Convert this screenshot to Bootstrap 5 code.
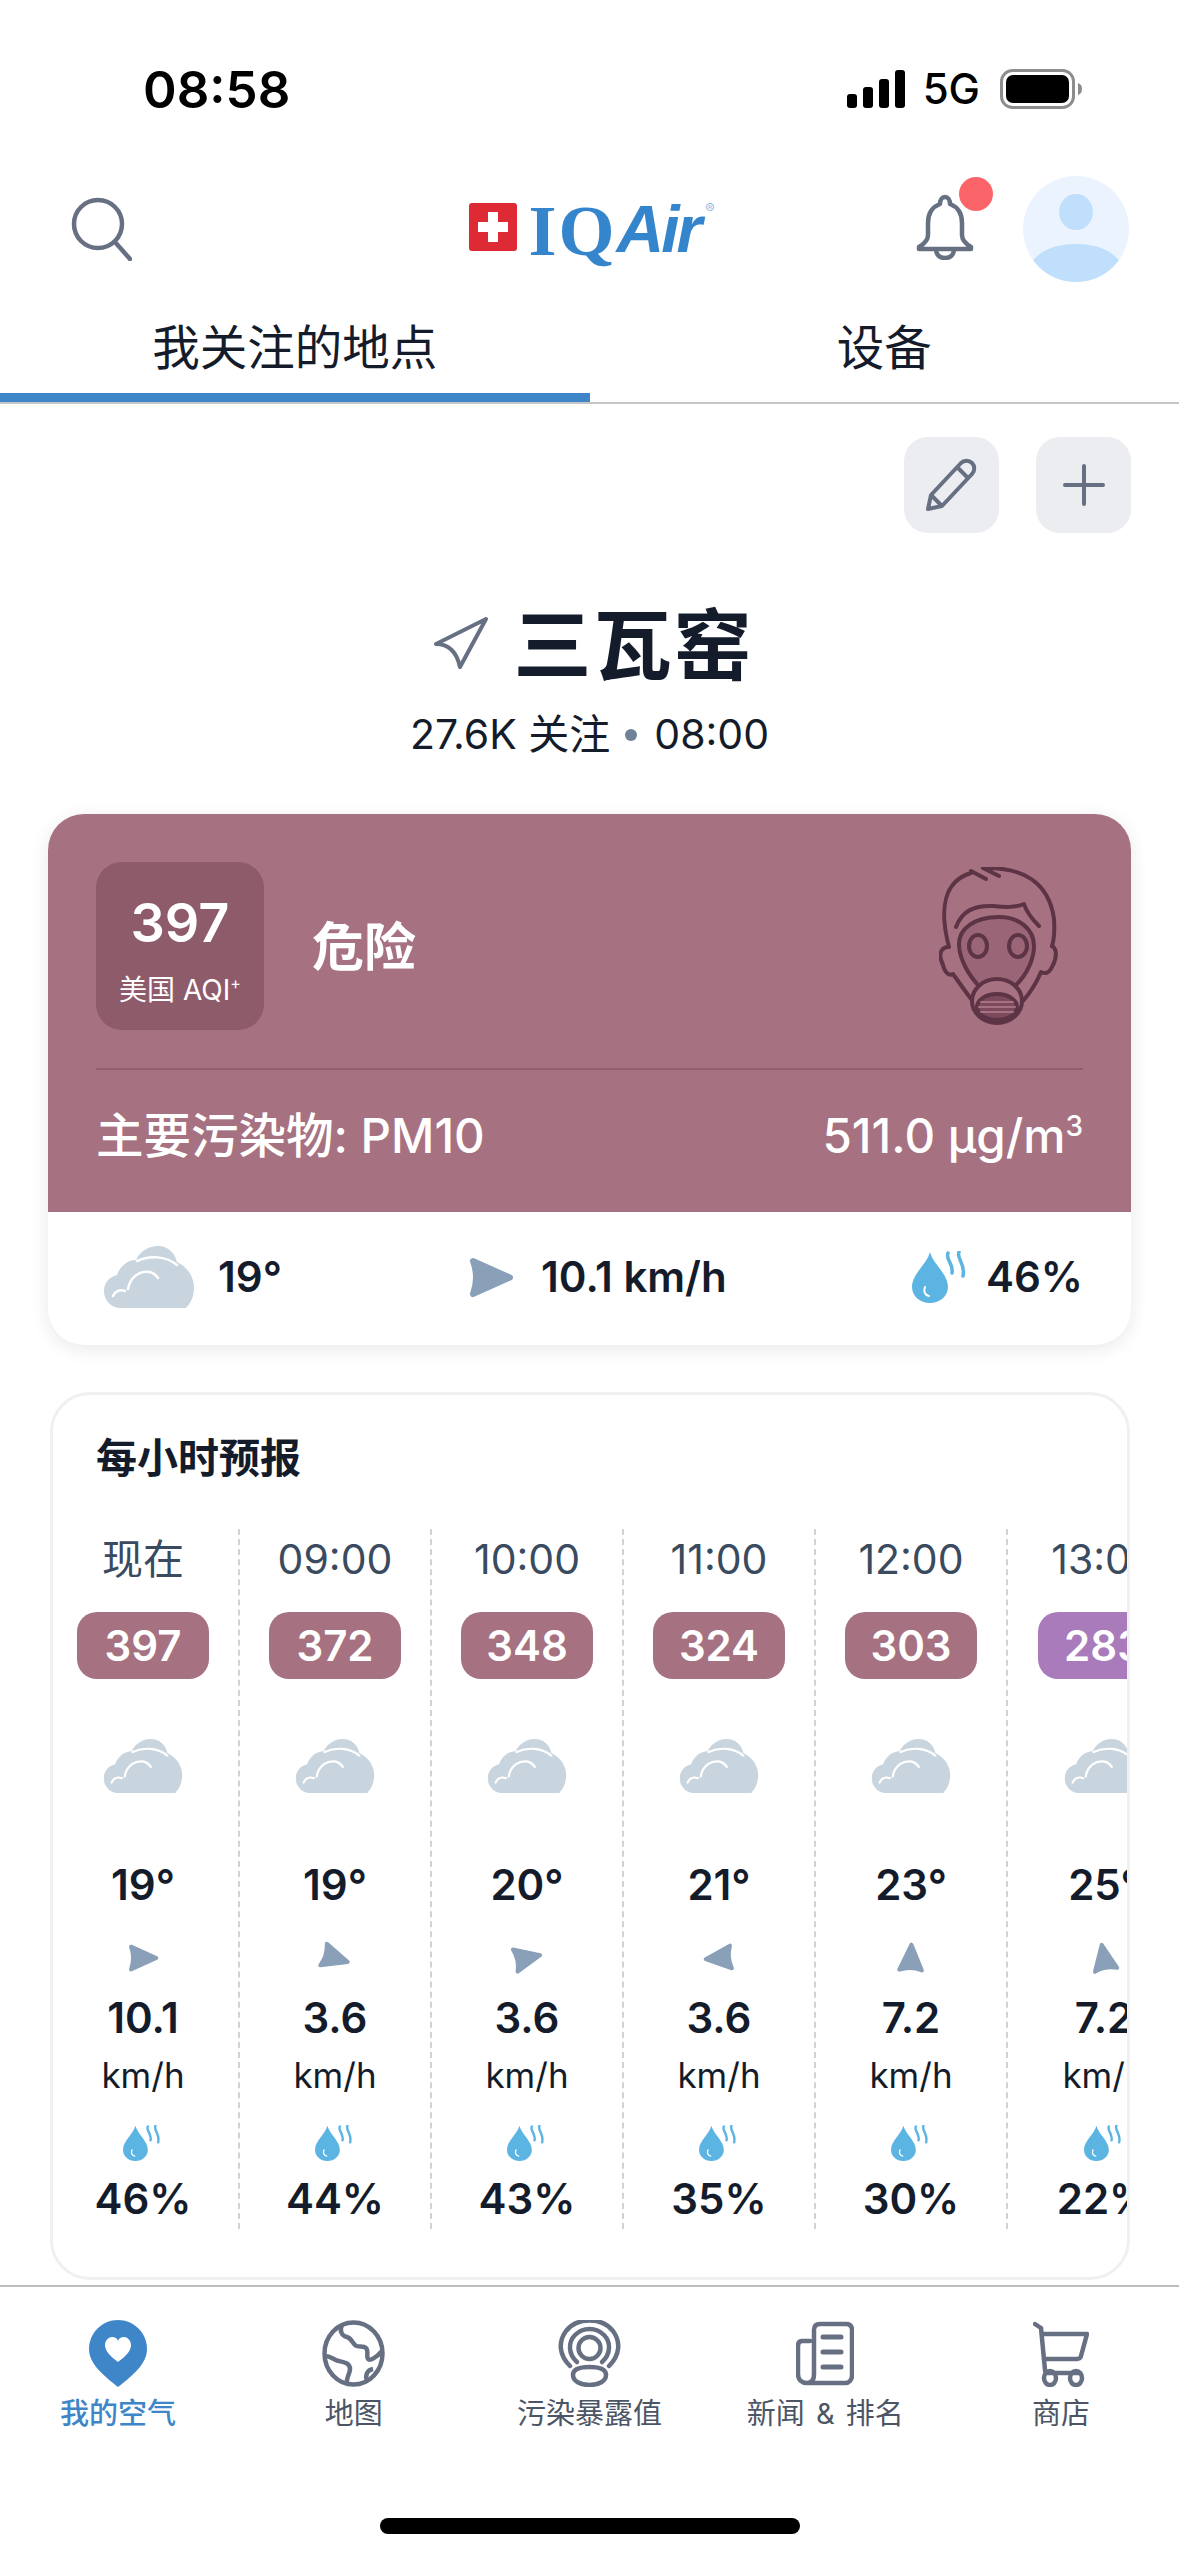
<!DOCTYPE html>
<html lang="zh">
<head>
    <meta charset="UTF-8">
    <meta name="viewport" content="width=device-width, initial-scale=1.0">
    <title>IQAir</title>
    <link href="https://cdn.jsdelivr.net/npm/bootstrap@5.3.0/dist/css/bootstrap.min.css" rel="stylesheet">
    <style>
        body { width: 1179px; height: 2556px; overflow: hidden; background: #fff; color: #141c2b; font-family: Inter, "Noto Sans CJK SC", sans-serif; }
        .status-row { height: 176px; padding: 2px 97px 0 143px; color: #000; }
        .status-time { font-size: 51px; font-weight: 600; line-height: 1; }
        .status-net { font-size: 42px; font-weight: 500; line-height: 1; margin: 0 20px 0 17px; }
        .head-row { height: 104px; display: grid; grid-template-columns: 1fr auto 1fr; padding: 0 50px 2px 70px; }
        .iq-logo { width: 242px; height: 76px; margin-left: -20px; color: #3585cd; line-height: 1; }
        .iq-flag { width: 48px; height: 48px; margin-top: 12px; flex: none; }
        .iq-serif { font-family: "Liberation Serif", serif; font-size: 72px; font-weight: 700; margin: 4px 0 0 12px; letter-spacing: 2px; }
        .iq-sans { font-family: "Liberation Sans", sans-serif; font-size: 66px; font-weight: 700; font-style: italic; margin-top: 5px; letter-spacing: -3px; }
        .iq-reg { font-size: 14px; color: #8dbde4; margin: 11px 0 0 6px; }
        .bell-wrap { width: 60px; height: 72px; margin: 0 48px 10px 0; }
        .bell-dot { position: absolute; top: -11px; left: 44px; width: 34px; height: 34px; border-radius: 50%; background: #fb6468; }
        .tab-row { height: 124px; margin: 0; border-bottom: 2px solid #c4c6c9; }
        .tab-row .nav-link { color: #141c2b; font-size: 47.5px; line-height: 60px; padding: 38px 0 24px; margin-bottom: -2px; }
        .tab-row .active-tab { border-bottom: 9px solid #3f86c8; padding-bottom: 15px; }
        .tool-row { padding: 33px 48px 0 0; gap: 37px; }
        .tool-btn { width: 95px; height: 96px; padding: 0; border: 0; border-radius: 24px; background: #ebedf1; }
        .place-row { margin-top: 72px; height: 82px; gap: 24px; padding-left: 8px; }
        .place-row svg { margin-bottom: 6px; }
        .place-name { font-size: 78px; font-weight: 700; line-height: 82px; letter-spacing: 2px; }
        .place-sub { margin-top: 22px; font-size: 41px; line-height: 50px; }
        .sub-dot { display: inline-block; width: 12px; height: 12px; border-radius: 50%; background: #6f8299; margin: 0 17px 6px 15px; vertical-align: middle; }
        .aqi-card { margin: 55px 48px 0; height: 531px; border: 0; border-radius: 36px; overflow: hidden; box-shadow: 0 4px 18px rgba(20, 30, 50, .1); }
        .aqi-top { height: 398px; padding: 48px 48px 0; background: #a67180; color: #fff; }
        .aqi-box { width: 168px; height: 168px; border-radius: 26px; background: #8e5b6b; padding-top: 30px; }
        .aqi-num { font-size: 54px; font-weight: 600; line-height: 62px; }
        .aqi-lbl { font-size: 28px; line-height: 30px; margin-top: 21px; white-space: nowrap; }
        .aqi-lbl sup { font-size: 16px; top: -.7em; }
        .aqi-word { font-size: 52px; font-weight: 600; margin: 3px 0 0 48px; line-height: 60px; }
        .aqi-rule { height: 2px; background: #945e70; margin: 38px 0 0; }
        .aqi-main { font-size: 47.5px; font-weight: 500; line-height: 56px; margin-top: 38px; }
        .aqi-main sup { font-size: 28px; top: -.6em; }
        .aqi-low { height: 133px; padding: 0 48px 3px 56px; }
        .low-gap { gap: 27px; }
        .low-val { font-size: 42px; font-weight: 600; line-height: 50px; }
        .hour-card { margin: 47px 49px 0 50px; height: 888px; border: 3px solid #eef0f2; border-radius: 40px; overflow: hidden; }
        .hour-title { font-size: 41px; font-weight: 600; line-height: 50px; margin: 38px 0 46px 43px; }
        .hour-track { margin-left: -5px; }
        .hour-col { flex: 0 0 192px; height: 700px; border-right: 2px dashed #cfd2d6; }
        .hour-col:last-child { border-right: 0; }
        .h-time { font-size: 41px; line-height: 60px; color: #3a4a5f; }
        .h-pill { width: 132px; height: 67px; margin-top: 23px; border-radius: 20px; color: #fff; font-size: 42px; font-weight: 600; line-height: 67px; text-align: center; }
        .h-cloud { margin-top: 60px; }
        .h-temp { margin-top: 67px; font-size: 42px; font-weight: 600; line-height: 50px; }
        .h-wind { margin-top: 33px; }
        .h-speed { margin-top: 20px; font-size: 42px; font-weight: 600; line-height: 50px; }
        .h-unit { margin-top: 7px; font-size: 35px; line-height: 50px; }
        .h-drop { margin: 25px 0 0 0; }
        .h-pct { margin-top: 13px; font-size: 42px; font-weight: 600; line-height: 50px; }
        .tab-bar { margin-top: 5px; border-top: 2px solid #bcbec1; padding-top: 33px; }
        .tab-item { flex: 1 1 0; color: #4c5566; font-size: 29px; line-height: 40px; white-space: nowrap; word-spacing: 3px; }
        .tab-item svg { height: 67px; margin-bottom: 7px; }
        .tab-on { color: #3f86c8; font-weight: 500; }
        .home-bar { width: 420px; height: 16px; border-radius: 8px; background: #000; margin: 84px auto 0; }
    </style>
</head>
<body>

    <svg width="0" height="0" class="position-absolute">
        <symbol id="cloud" viewBox="0 0 90 62">
            <path fill="#c9d5de" d="M14 62C5 60 0 53 0 45 0 37 5 31 13 29 16 20 24 14 32 14 36 5 45 0 54 0 64 0 71 7 73 16 83 21 90 30 90 42 90 50 87 57 82 62Z"/>
            <path fill="none" stroke="#fff" stroke-width="2.5" stroke-linecap="round" d="M9 50C11 45 16 43 21 45M24 43C26 31 36 24 46 26 50 27 52 29 54 32M33 15C46 9 62 10 73 19"/>
        </symbol>
        <symbol id="wind" viewBox="0 0 48 44">
            <path fill="#8aa0b8" stroke="#8aa0b8" stroke-width="6" stroke-linejoin="round" d="M6 5 44 22 6 39C10 28 10 16 6 5Z"/>
        </symbol>
        <symbol id="drop" viewBox="0 0 58 52">
            <path fill="#5bb4e2" d="M18 1C15 13 0 23 0 36 0 45 8 52 18 52 28 52 36 45 36 36 36 23 21 13 18 1Z"/>
            <path fill="none" stroke="#fff" stroke-width="2" stroke-linecap="round" d="M13 36C11 41 13 44 17 45"/>
            <path fill="none" stroke="#5bb4e2" stroke-width="3.5" stroke-linecap="round" d="M36 2C33 8 42 13 40 22M47 1C44 7 54 13 51 25"/>
        </symbol>
    </svg>

    <!-- barre d'etat -->
    <div class="status-row d-flex justify-content-between align-items-center">
        <span class="status-time">08:58</span>
        <div class="d-flex align-items-center">
            <svg width="59" height="38" viewBox="0 0 59 38"><g fill="#000"><rect x="0" y="24" width="10" height="14" rx="3"/><rect x="16" y="17" width="10" height="21" rx="3"/><rect x="32" y="9" width="10" height="29" rx="3"/><rect x="48" y="0" width="10" height="38" rx="3"/></g></svg>
            <span class="status-net">5G</span>
            <svg width="82" height="40" viewBox="0 0 82 40"><rect x="1.5" y="1.5" width="72" height="37" rx="11" fill="none" stroke="#8d8d8d" stroke-width="3"/><rect x="6" y="6" width="63" height="28" rx="7" fill="#000"/><path d="M78 14c3 1 4 3 4 6s-1 5-4 6z" fill="#8d8d8d"/></svg>
        </div>
    </div>

    <div class="head-row align-items-center">
        <svg width="62" height="64" viewBox="0 0 62 64" fill="none" stroke="#677083" stroke-width="4.5" stroke-linecap="round"><circle cx="28" cy="27" r="24"/><path d="M45 45 60 62"/></svg>
        <div class="iq-logo d-flex">
            <svg class="iq-flag" viewBox="0 0 48 48"><rect width="48" height="48" rx="3" fill="#dd2a35"/><path fill="#fff" d="M19 9h10v10h10v10H29v10H19V29H9V19h10z"/></svg>
            <span class="iq-serif">IQ</span><span class="iq-sans">Air</span><span class="iq-reg">®</span>
        </div>
        <div class="d-flex justify-content-end align-items-center">
            <div class="bell-wrap position-relative">
                <svg width="60" height="66" viewBox="0 0 60 66" class="position-absolute bottom-0 start-0" fill="none" stroke="#677083" stroke-width="4.5" stroke-linejoin="round"><path d="M30 3c-3 0-5 3-5 7-8 3-12 10-12 19v12c0 5-4 9-9 12v2h52v-2c-5-3-9-7-9-12V29c0-9-4-16-12-19 0-4-2-7-5-7z"/><path d="M21 55c0 6 4 9 9 9s9-3 9-9"/></svg>
                <span class="bell-dot"></span>
            </div>
            <svg width="106" height="106" viewBox="0 0 106 106"><defs><clipPath id="face"><circle cx="53" cy="53" r="53"/></clipPath></defs><circle cx="53" cy="53" r="53" fill="#ebf4fe"/><g clip-path="url(#face)" fill="#bfdffc"><ellipse cx="53" cy="36" rx="17" ry="18"/><path d="M9 86C17 74 33 68 53 68S89 74 97 86 75 106 53 106 1 98 9 86z"/></g></svg>
        </div>
    </div>

    <ul class="nav nav-justified tab-row">
        <li class="nav-item"><a class="nav-link active-tab" href="#">我关注的地点</a></li>
        <li class="nav-item"><a class="nav-link" href="#">设备</a></li>
    </ul>

    <div class="tool-row d-flex justify-content-end">
        <button class="btn tool-btn"><svg width="56" height="56" viewBox="0 0 56 56" fill="none" stroke="#677083" stroke-width="4" stroke-linejoin="round"><path d="M4 52 7 38 37 6c3-3 8-3 11 0s3 8 0 11L18 49z"/><path d="M33 10 44 21M7 38 18 49"/></svg></button>
        <button class="btn tool-btn"><svg width="42" height="42" viewBox="0 0 42 42" stroke="#677083" stroke-width="4" stroke-linecap="round"><path d="M21 2v38M2 21h38"/></svg></button>
    </div>

    <div class="place-row d-flex justify-content-center align-items-center">
        <svg width="56" height="52" viewBox="0 0 56 52" fill="none" stroke="#677083" stroke-width="4" stroke-linejoin="round"><path d="M53 2 3 27c10 0 20 5 24 23z"/></svg>
        <span class="place-name">三瓦窑</span>
    </div>
    <div class="place-sub text-center">27.6K 关注<span class="sub-dot"></span>08:00</div>

    <!-- carte AQI -->
    <div class="card aqi-card">
        <div class="aqi-top">
            <div class="d-flex align-items-center">
                <div class="aqi-box text-center">
                    <div class="aqi-num">397</div>
                    <div class="aqi-lbl">美国 AQI<sup>+</sup></div>
                </div>
                <div class="aqi-word flex-grow-1">危险</div>
                <svg width="120" height="158" viewBox="40 28 120 158" class="me-4" fill="none" stroke="#5d3445" stroke-width="4" stroke-linecap="round" stroke-linejoin="round">
                    <path d="M50 108C40 70 45 42 72 34M72 32 87 40M84 29 100 37M84 29C122 28 150 42 155 80 156 95 155 101 153 107"/>
                    <path d="M48 108C40 110 40 118 44 126 46 134 50 137 54 135 62 146 68 155 76 165"/>
                    <path d="M153 107C158 110 158 118 154 126 150 135 146 135 142 133 137 145 130 155 124 162"/>
                    <path d="M57 88C63 72 75 66 95 67 105 68 115 69 125 65 128 75 135 82 140 87"/>
                    <path fill="#9a6576" d="M78 145C65 130 60 115 60 105 60 90 75 78 100 78 120 78 135 90 135 107 135 120 128 135 118 145"/>
                    <ellipse cx="79" cy="107" rx="9" ry="11"/><ellipse cx="119" cy="107" rx="9" ry="11"/>
                    <ellipse cx="98" cy="162" rx="25" ry="22" fill="#a67180"/>
                    <ellipse cx="98" cy="168" rx="20" ry="13" fill="#7c4a5c"/>
                    <path stroke="#a67180" stroke-width="2" d="M82 163H114M80 168H116M82 173H114"/>
                </svg>
            </div>
            <div class="aqi-rule"></div>
            <div class="aqi-main d-flex justify-content-between">
                <span>主要污染物: PM10</span>
                <span>511.0 µg/m<sup>3</sup></span>
            </div>
        </div>
        <div class="aqi-low d-flex justify-content-between align-items-center">
            <div class="d-flex align-items-center gap-4"><svg width="90" height="62"><use href="#cloud"/></svg><span class="low-val">19°</span></div>
            <div class="d-flex align-items-center low-gap"><svg width="47" height="43"><use href="#wind"/></svg><span class="low-val">10.1 km/h</span></div>
            <div class="d-flex align-items-center gap-3"><svg width="58" height="52"><use href="#drop"/></svg><span class="low-val">46%</span></div>
        </div>
    </div>

    <!-- previsions -->
    <div class="card hour-card">
        <div class="hour-title">每小时预报</div>
        <div class="hour-track d-flex" id="hourTrack"></div>
    </div>

    <div class="tab-bar d-flex">
        <div class="tab-item tab-on d-flex flex-column align-items-center">
            <svg width="58" height="67" viewBox="0 0 58 67"><path fill="#3f86c8" d="M29 0C13 0 0 13 0 29 0 44 15 56 29 67 43 56 58 44 58 29 58 13 45 0 29 0Z"/><path fill="#fff" d="M29 42C21 36 16 31 16 25 16 20 20 17 23 17 26 17 28 18 29 21 30 18 32 17 35 17 38 17 42 20 42 25 42 31 37 36 29 42Z"/></svg>
            <span>我的空气</span>
        </div>
        <div class="tab-item d-flex flex-column align-items-center">
            <svg width="63" height="67" viewBox="0 0 63 67" fill="none" stroke="#677083" stroke-width="4.5" stroke-linejoin="round"><ellipse cx="31.5" cy="33.5" rx="29" ry="31"/><path d="M20 5C17 11 20 16 25 17 29 18 30 22 33 25 36 28 41 25 44 28 47 31 44 36 46 39 48 41 54 38 60 31"/><path d="M3 36C9 36 12 40 17 41 22 42 28 43 28 49 28 54 24 57 25 63"/><path d="M45 61C43 55 45 50 51 49"/></svg>
            <span>地图</span>
        </div>
        <div class="tab-item d-flex flex-column align-items-center">
            <svg width="65" height="67" viewBox="0 0 65 67" fill="none" stroke="#677083" stroke-width="4.5" stroke-linecap="round"><path d="M13 46C2 35 1 22 9 11 20-3 45-3 56 11 64 22 63 35 52 46"/><path d="M20 42C11 34 11 22 18 15 26 7 39 7 47 15 54 22 54 34 45 42"/><circle cx="32.5" cy="28" r="11"/><path d="M32.5 47C21 47 16 50 16 55 16 61 23 65 32.5 65S49 61 49 55C49 50 44 47 32.5 47Z"/></svg>
            <span>污染暴露值</span>
        </div>
        <div class="tab-item d-flex flex-column align-items-center">
            <svg width="58" height="67" viewBox="0 0 58 67" fill="none" stroke="#677083" stroke-width="4.5" stroke-linecap="round" stroke-linejoin="round"><path d="M14 21H6C3 21 2 23 2 26V54C2 60 6 63 11 63 16 63 18 60 18 54V10C18 6 20 4 24 4H50C54 4 56 6 56 10V55C56 60 53 63 49 63H11"/><path stroke-width="5" d="M27 17H45M27 32H45M27 47H45"/></svg>
            <span>新闻 &amp; 排名</span>
        </div>
        <div class="tab-item d-flex flex-column align-items-center">
            <svg width="56" height="67" viewBox="0 0 56 67" fill="none" stroke="#677083" stroke-width="4.5" stroke-linecap="round" stroke-linejoin="round"><path d="M2 4 8 8 12 50C12 52 13 53 15 53H46"/><path d="M9 14H54L48 36C48 38 46 39 44 39H11"/><ellipse cx="17" cy="58" rx="6" ry="7"/><ellipse cx="43" cy="58" rx="6" ry="7"/></svg>
            <span>商店</span>
        </div>
    </div>
    <div class="home-bar"></div>

    <script>
        const heures = [
            { t: "现在", aqi: 397, c: "#a67180", deg: 19, rot: 0, v: "10.1", h: 46 },
            { t: "09:00", aqi: 372, c: "#a67180", deg: 19, rot: 17, v: "3.6", h: 44 },
            { t: "10:00", aqi: 348, c: "#a67180", deg: 20, rot: -12, v: "3.6", h: 43 },
            { t: "11:00", aqi: 324, c: "#a67180", deg: 21, rot: 175, v: "3.6", h: 35 },
            { t: "12:00", aqi: 303, c: "#a67180", deg: 23, rot: -88, v: "7.2", h: 30 },
            { t: "13:00", aqi: 283, c: "#a97bbb", deg: 25, rot: -100, v: "7.2", h: 22 }
        ];

        const track = document.getElementById("hourTrack");
        heures.forEach(h => {
            track.innerHTML += `<div class="hour-col d-flex flex-column align-items-center">
                <div class="h-time">${h.t}</div>
                <div class="h-pill" style="background:${h.c}">${h.aqi}</div>
                <svg class="h-cloud" width="80" height="54"><use href="#cloud"/></svg>
                <div class="h-temp">${h.deg}°</div>
                <svg class="h-wind" width="32" height="30" style="transform:rotate(${h.rot}deg)"><use href="#wind"/></svg>
                <div class="h-speed">${h.v}</div>
                <div class="h-unit">km/h</div>
                <svg class="h-drop" width="40" height="36"><use href="#drop"/></svg>
                <div class="h-pct">${h.h}%</div>
            </div>`;
        });
    </script>
    <script src="https://cdn.jsdelivr.net/npm/bootstrap@5.3.0/dist/js/bootstrap.bundle.min.js"></script>
</body>
</html>
